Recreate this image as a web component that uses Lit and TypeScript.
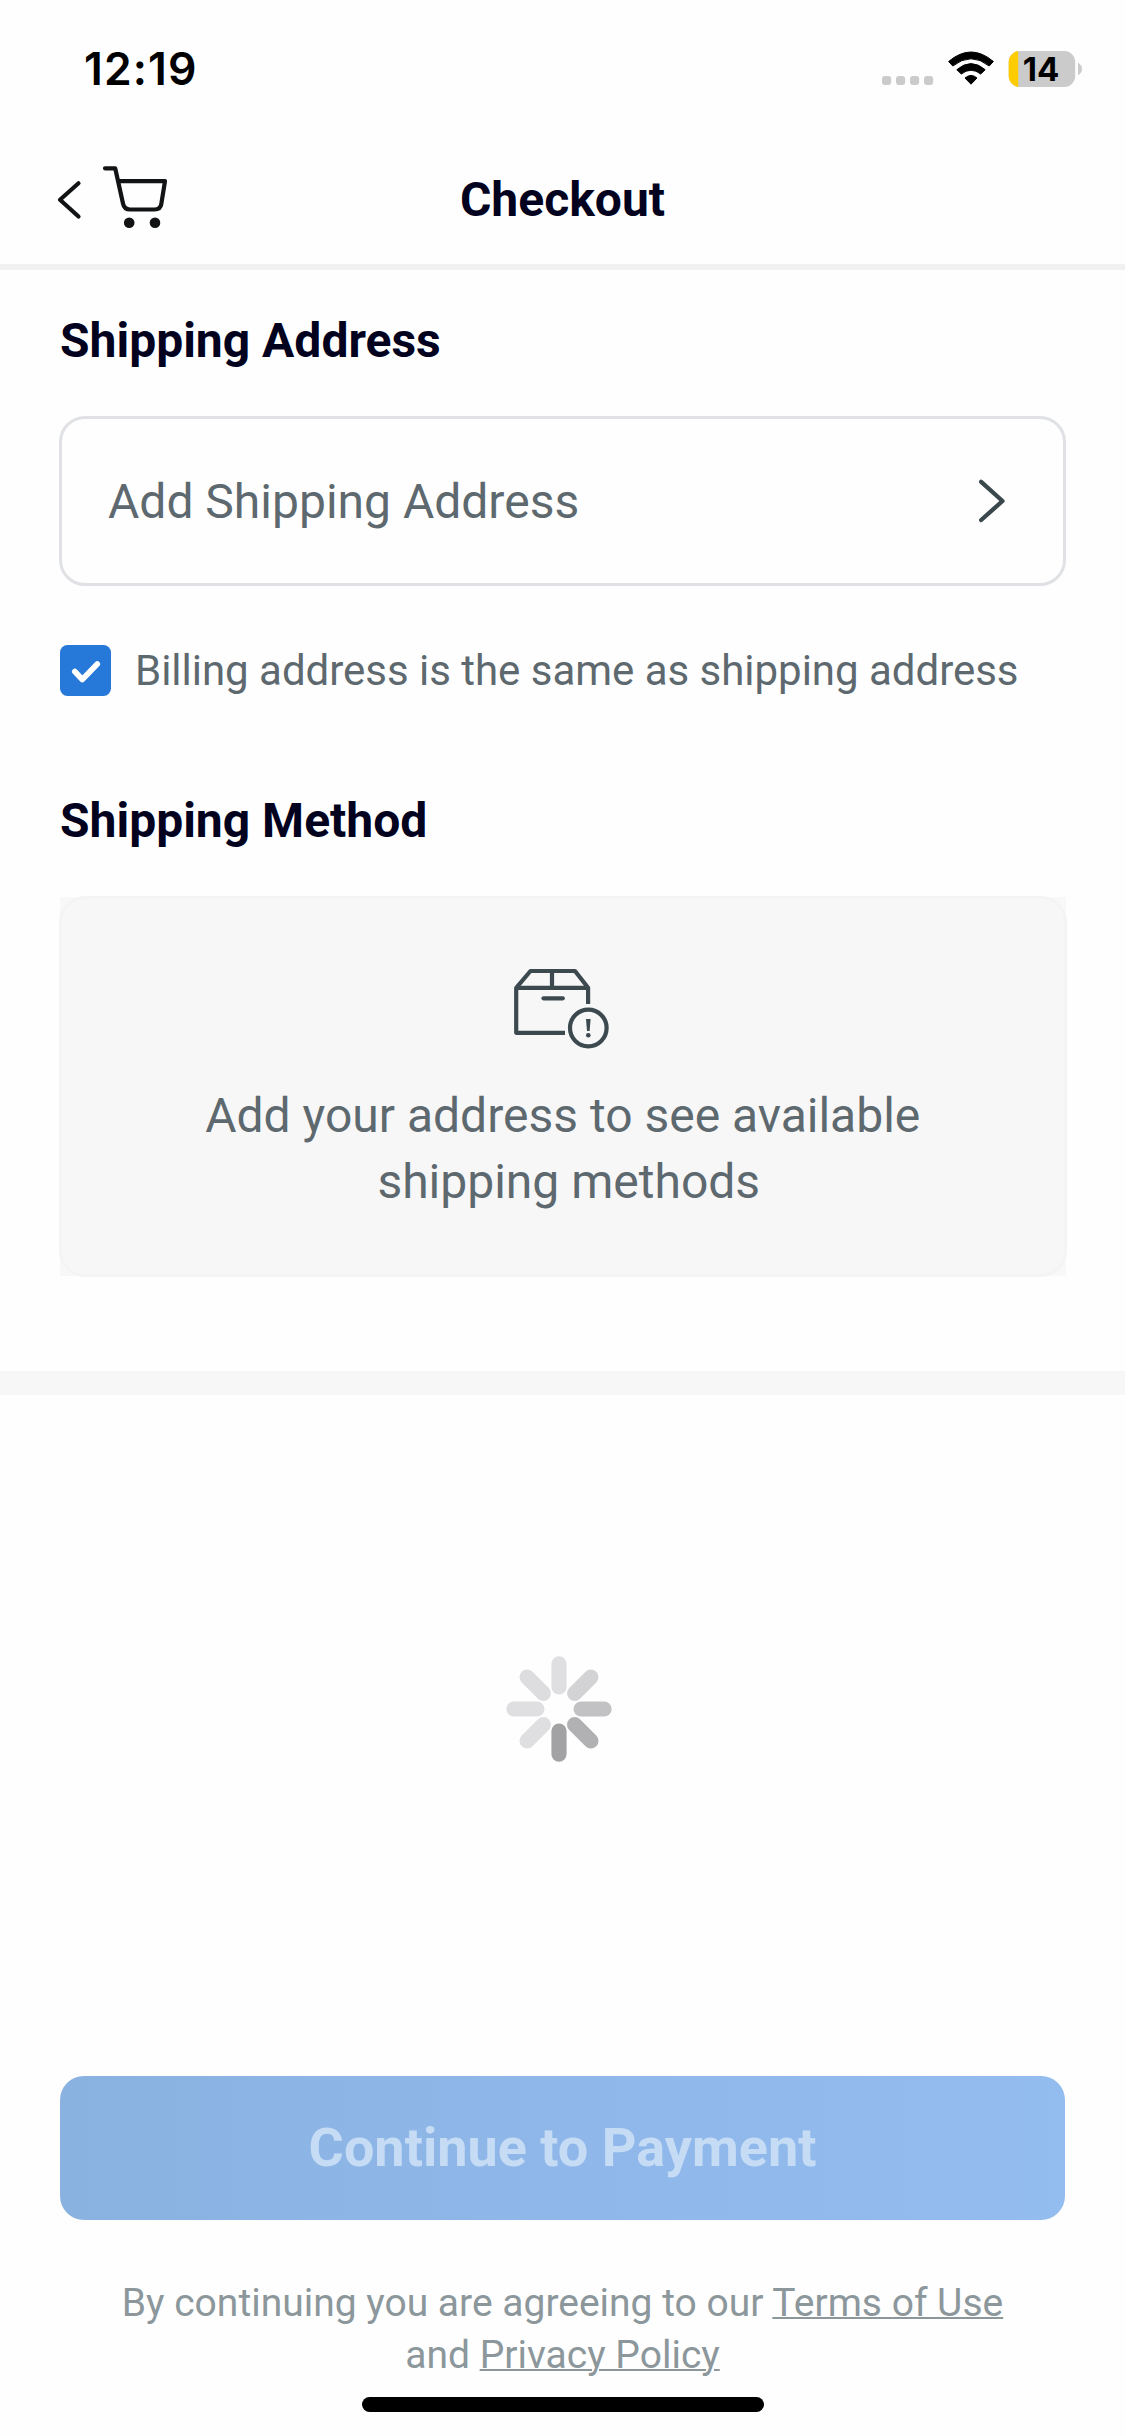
import { LitElement, html, css, svg } from "lit";
import { customElement } from "lit/decorators.js";

const PETALS = ["#dfdfe1", "#d3d3d5", "#c2c2c4", "#b1b1b3", "#a2a2a4", "#dfdfe1", "#dfdfe1", "#dddde0"];

@customElement("status-bar")
class StatusBar extends LitElement {
  static styles = css`
    :host { display: flex; justify-content: space-between; height: 135px; box-sizing: border-box;
      padding: 46px 42px 0 84px; font-family: Inter, "Liberation Sans", sans-serif; color: #000; }
    .time { font-size: 44.5px; font-weight: 600; line-height: 46px; letter-spacing: 1.1px; }
    .icons { display: block; width: 204px; height: 46px; }
    .level { font-size: 33px; font-weight: 700; }
  `;
  render() {
    return html`
      <span class="time">12:19</span>
      <svg class="icons" viewBox="879 46 204 46">
        ${[882, 896, 910, 924].map((x) => svg`<rect x=${x} y="76" width="9.2" height="9" rx="3" fill="#cbcbcb"/>`)}
        <path d="M948.6 61.5Q971 42.500 993.400 61.500L989.200 66Q971 51.500 952.800 66Z" fill="#000" stroke="#000" stroke-width="1" stroke-linejoin="round"/>
        <path d="M956.800 69.700Q971 57.500 985.200 69.700L980.700 74Q971 66.500 961.300 74Z" fill="#000" stroke="#000" stroke-width="1" stroke-linejoin="round"/>
        <path d="M965 78Q971 72.800 977 78L971 84.200Z" fill="#000" stroke="#000" stroke-width="1" stroke-linejoin="round"/>
        <clipPath id="cell"><rect x="1008.700" y="51" width="66.500" height="36" rx="11"/></clipPath>
        <g clip-path="url(#cell)">
          <rect x="1008" y="51" width="68" height="36" fill="#cbcbcb"/>
          <rect x="1008" y="51" width="10.200" height="36" fill="#ffcc00"/>
        </g>
        <path d="M1078 62.800Q1082 65 1082 69T1078 75.200Z" fill="#cbcbcb"/>
        <text class="level" x="1041" y="81" text-anchor="middle">14</text>
      </svg>`;
  }
}

@customElement("page-header")
class PageHeader extends LitElement {
  static styles = css`
    :host { display: grid; grid-template-columns: 1fr auto 1fr; align-items: center; height: 135px;
      box-sizing: border-box; border-bottom: 6px solid #f1f1f1; padding: 0 54px; }
    .nav { display: block; width: 116px; height: 70px; }
    .title { margin: 0; font-size: 48px; line-height: 60px; font-weight: 700; color: #02021e; }
  `;
  render() {
    return html`
      <svg class="nav" viewBox="54 164.500 116 70" fill="none" stroke="#111314" stroke-width="4.200" stroke-linecap="round" stroke-linejoin="round">
        <path d="M78.500 182.800L60 199.300L78.500 216"/>
        <path d="M105 167.800H115.200L123 203Q124.200 209 130 209H154.500Q160.500 209 161.300 203.500L165 180.600H118.300"/>
        <circle cx="129.200" cy="222.300" r="5.300" fill="#111314" stroke="none"/>
        <circle cx="155" cy="222.300" r="5.300" fill="#111314" stroke="none"/>
      </svg>
      <h1 class="title">Checkout</h1>
      <span></span>`;
  }
}

@customElement("shipping-form")
class ShippingForm extends LitElement {
  static styles = css`
    :host { display: flex; flex-direction: column; padding: 41px 59px 94px; }
    .heading { margin: 0 0 45px 1px; font-size: 48px; line-height: 60px; font-weight: 700; color: #02021e; }
    .card { display: flex; align-items: center; justify-content: space-between; height: 170px;
      box-sizing: border-box; border: 3px solid #dfe1e5; border-radius: 26px; padding: 0 57px 0 46px;
      font-size: 48px; color: #5d696f; }
    .chevron { display: block; width: 30px; height: 46px; }
    .billing { display: flex; align-items: center; gap: 24px; height: 51px; margin: 59px 0 95px 1px;
      font-size: 42px; letter-spacing: -0.02px; color: #5d696f; white-space: nowrap; }
    .box { display: block; width: 51px; height: 51px; flex: none; }
    .empty { display: flex; flex-direction: column; height: 381px; margin-right: -0.5px; padding: 1px;
      box-sizing: border-box; }
    .fill { flex: 1; background: #f8f8f8; display: flex; flex-direction: column; align-items: center; }
    .frame { align-self: stretch; flex: 1; margin: -1px; border: 3px solid #f4f4f5; border-radius: 26px;
      display: flex; flex-direction: column; align-items: center; background: #f7f7f8; padding-top: 67px; }
    .parcel { display: block; width: 100px; height: 84px; margin-right: 2.5px; }
    .hint { margin: 33px 0 0; font-size: 48px; line-height: 66px; color: #5d696f; text-align: center; width: 760px; }
    .second { padding-left: 12px; }
  `;
  render() {
    return html`
      <h2 class="heading">Shipping Address</h2>
      <div class="card">
        <span>Add Shipping Address</span>
        <svg class="chevron" viewBox="976 478 30 46" fill="none" stroke="#3a474c" stroke-width="4.300" stroke-linecap="round" stroke-linejoin="round">
          <path d="M981.200 481.800L1002.500 501L981.200 520"/>
        </svg>
      </div>
      <label class="billing">
        <svg class="box" viewBox="60 645 51 51">
          <rect x="60" y="645" width="51" height="51" rx="7.500" fill="#2679d9"/>
          <path d="M74.800 671.500L82.300 679.500L97.300 664" fill="none" stroke="#fff" stroke-width="5.600" stroke-linecap="round" stroke-linejoin="round"/>
        </svg>
        <span>Billing address is the same as shipping address</span>
      </label>
      <h2 class="heading">Shipping Method</h2>
      <div class="empty"><div class="fill"><div class="frame">
        <svg class="parcel" viewBox="512 966 100 84" fill="none" stroke="#3c4a50" stroke-width="4.200" stroke-linejoin="round">
          <path d="M565 1032.800H516.200V987.800L530.500 971H575L588.100 987.800V1004"/>
          <path d="M516.200 987.800H588.100M552 971V987.800"/>
          <path d="M543.500 998.300H562.800" stroke-linecap="round"/>
          <circle cx="588.300" cy="1028" r="18.300"/>
          <path d="M586 1019H590.600L589.600 1031H587Z" fill="#3c4a50" stroke="none"/>
          <circle cx="588.300" cy="1035.200" r="2.300" fill="#3c4a50" stroke="none"/>
        </svg>
        <p class="hint">Add your address to see available <br><span class="second">shipping methods</span></p>
      </div></div></div>`;
  }
}

@customElement("loading-area")
class LoadingArea extends LitElement {
  static styles = css`
    :host { display: flex; flex: 1; justify-content: center; padding: 258.5px 7px 0 0; box-sizing: border-box; }
    .spinner { display: block; width: 110px; height: 110px; }
  `;
  render() {
    return html`
      <svg class="spinner" viewBox="-55 -55 110 110">
        ${PETALS.map((c, i) => svg`<rect x="-7.600" y="-52.700" width="15.200" height="38.200" rx="7.600" fill=${c} transform=${`rotate(${i * 45})`}/>`)}
      </svg>`;
  }
}

@customElement("checkout-footer")
class CheckoutFooter extends LitElement {
  static styles = css`
    :host { display: flex; flex-direction: column; align-items: center; height: 360px; padding: 0 60px; }
    .pay { align-self: stretch; height: 144px; border: 0; border-radius: 24px; padding: 0;
      background: linear-gradient(90deg, #8ab2e0, #8fb7e9 50%, #93bcef); color: #c6dcf5;
      font: 700 54px/144px Roboto, sans-serif; text-align: center; }
    .terms { margin: 57px 0 0; width: 900px; font-size: 39px; line-height: 52px; color: #8c979c; text-align: center; }
    .link { text-decoration: underline; text-decoration-thickness: 2px; color: inherit; }
    .indicator { width: 402px; height: 15px; border-radius: 8px; background: #000; margin-top: 16px; }
  `;
  render() {
    return html`
      <button class="pay">Continue to Payment</button>
      <p class="terms">By continuing you are agreeing to our <a class="link">Terms of Use</a><br>and <a class="link">Privacy Policy</a></p>
      <div class="indicator"></div>`;
  }
}

@customElement("app-root")
class AppRoot extends LitElement {
  static styles = css`
    :host { display: flex; flex-direction: column; width: 1125px; height: 2436px; overflow: hidden;
      background: #fefefe; font-family: Roboto, "Liberation Sans", sans-serif; }
    .band { height: 24px; background: #f7f7f7; }
  `;
  render() {
    return html`
      <status-bar></status-bar>
      <page-header></page-header>
      <shipping-form></shipping-form>
      <div class="band"></div>
      <loading-area></loading-area>
      <checkout-footer></checkout-footer>`;
  }
}
